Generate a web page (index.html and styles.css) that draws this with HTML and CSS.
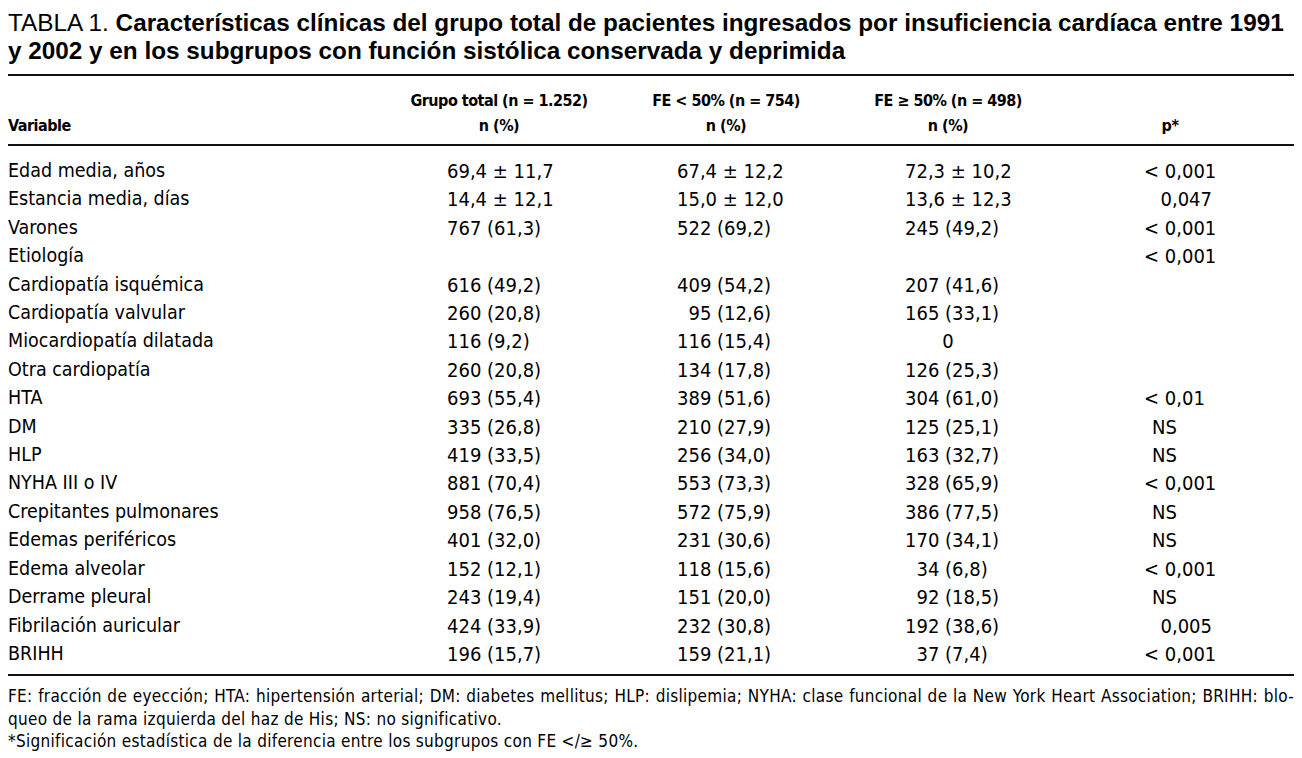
FILE: index.html
```html
<!DOCTYPE html>
<html lang="es">
<head>
<meta charset="utf-8">
<title>Tabla 1</title>
<link rel="stylesheet" href="styles.css">
</head>
<body>
<main class="page">
  <h1 class="title"><span class="label">TABLA 1.</span> <span class="title-bold">Características clínicas del grupo total de pacientes ingresados por insuficiencia cardíaca entre 1991<br>y 2002 y en los subgrupos con función sistólica conservada y deprimida</span></h1>
  <table class="data">
    <colgroup>
      <col class="c0"><col class="c1"><col class="c2"><col class="c3"><col class="c4">
    </colgroup>
    <thead>
      <tr class="hrow1">
        <th></th>
        <th class="hc">Grupo total (n = 1.252)</th>
        <th class="hc">FE &lt; 50% (n = 754)</th>
        <th class="hc">FE ≥ 50% (n = 498)</th>
        <th></th>
      </tr>
      <tr class="hrow2">
        <th class="hvar">Variable</th>
        <th class="hc">n (%)</th>
        <th class="hc">n (%)</th>
        <th class="hc">n (%)</th>
        <th class="hc hp">p*</th>
      </tr>
    </thead>
    <tbody>
      <tr><td>Edad media, años</td><td class="v1">69,4 ± 11,7</td><td class="v2">67,4 ± 12,2</td><td class="v3">72,3 ± 10,2</td><td class="vp"><span class="pv">&lt; 0,001</span></td></tr>
      <tr><td>Estancia media, días</td><td class="v1">14,4 ± 12,1</td><td class="v2">15,0 ± 12,0</td><td class="v3">13,6 ± 12,3</td><td class="vp"><span class="pv pr">0,047</span></td></tr>
      <tr><td>Varones</td><td class="v1">767 (61,3)</td><td class="v2">522 (69,2)</td><td class="v3">245 (49,2)</td><td class="vp"><span class="pv">&lt; 0,001</span></td></tr>
      <tr><td>Etiología</td><td class="v1"></td><td class="v2"></td><td class="v3"></td><td class="vp"><span class="pv">&lt; 0,001</span></td></tr>
      <tr><td>Cardiopatía isquémica</td><td class="v1">616 (49,2)</td><td class="v2">409 (54,2)</td><td class="v3">207 (41,6)</td><td class="vp"></td></tr>
      <tr><td>Cardiopatía valvular</td><td class="v1">260 (20,8)</td><td class="v2">&#8199;95 (12,6)</td><td class="v3">165 (33,1)</td><td class="vp"></td></tr>
      <tr><td>Miocardiopatía dilatada</td><td class="v1">116 (9,2)</td><td class="v2">116 (15,4)</td><td class="v3 zero">0</td><td class="vp"></td></tr>
      <tr><td>Otra cardiopatía</td><td class="v1">260 (20,8)</td><td class="v2">134 (17,8)</td><td class="v3">126 (25,3)</td><td class="vp"></td></tr>
      <tr><td>HTA</td><td class="v1">693 (55,4)</td><td class="v2">389 (51,6)</td><td class="v3">304 (61,0)</td><td class="vp"><span class="pv">&lt; 0,01</span></td></tr>
      <tr><td>DM</td><td class="v1">335 (26,8)</td><td class="v2">210 (27,9)</td><td class="v3">125 (25,1)</td><td class="vp"><span class="pv ns">NS</span></td></tr>
      <tr><td>HLP</td><td class="v1">419 (33,5)</td><td class="v2">256 (34,0)</td><td class="v3">163 (32,7)</td><td class="vp"><span class="pv ns">NS</span></td></tr>
      <tr><td>NYHA III o IV</td><td class="v1">881 (70,4)</td><td class="v2">553 (73,3)</td><td class="v3">328 (65,9)</td><td class="vp"><span class="pv">&lt; 0,001</span></td></tr>
      <tr><td>Crepitantes pulmonares</td><td class="v1">958 (76,5)</td><td class="v2">572 (75,9)</td><td class="v3">386 (77,5)</td><td class="vp"><span class="pv ns">NS</span></td></tr>
      <tr><td>Edemas periféricos</td><td class="v1">401 (32,0)</td><td class="v2">231 (30,6)</td><td class="v3">170 (34,1)</td><td class="vp"><span class="pv ns">NS</span></td></tr>
      <tr><td>Edema alveolar</td><td class="v1">152 (12,1)</td><td class="v2">118 (15,6)</td><td class="v3">&#8199;34 (6,8)</td><td class="vp"><span class="pv">&lt; 0,001</span></td></tr>
      <tr><td>Derrame pleural</td><td class="v1">243 (19,4)</td><td class="v2">151 (20,0)</td><td class="v3">&#8199;92 (18,5)</td><td class="vp"><span class="pv ns">NS</span></td></tr>
      <tr><td>Fibrilación auricular</td><td class="v1">424 (33,9)</td><td class="v2">232 (30,8)</td><td class="v3">192 (38,6)</td><td class="vp"><span class="pv pr">0,005</span></td></tr>
      <tr><td>BRIHH</td><td class="v1">196 (15,7)</td><td class="v2">159 (21,1)</td><td class="v3">&#8199;37 (7,4)</td><td class="vp"><span class="pv">&lt; 0,001</span></td></tr>
    </tbody>
  </table>
  <div class="notes">
    <p class="note justify">FE: fracción de eyección; HTA: hipertensión arterial; DM: diabetes mellitus; HLP: dislipemia; NYHA: clase funcional de la New York Heart Association; BRIHH: blo-</p>
    <p class="note">queo de la rama izquierda del haz de His; NS: no significativo.</p>
    <p class="note">*Significación estadística de la diferencia entre los subgrupos con FE &lt;/≥ 50%.</p>
  </div>
</main>
</body>
</html>
```

FILE: styles.css
```css
html, body {
  margin: 0;
  padding: 0;
  background: #ffffff;
  color: #000000;
}

.page {
  width: 1286px;
  padding: 8px 8px 0 8px;
}

.title {
  margin: 0;
  padding-top: 1px;
  font-family: "Liberation Sans", Arial, sans-serif;
  font-size: 24.3px;
  line-height: 28px;
  font-weight: normal;
  color: #000;
}

.title .title-bold {
  font-weight: bold;
}

.data {
  margin-top: 9px;
  width: 1286px;
  table-layout: fixed;
  border-collapse: collapse;
  border-top: 2px solid #111;
  border-bottom: 2px solid #111;
  font-family: "DejaVu Sans Condensed", "DejaVu Sans", sans-serif;
  font-size: 19.5px;
}

.c0 { width: 384px; }
.c1 { width: 214px; }
.c2 { width: 240px; }
.c3 { width: 204px; }
.c4 { width: 244px; }

.data thead {
  border-bottom: 2px solid #111;
}

.data th {
  font-weight: bold;
  font-size: 16px;
  letter-spacing: -0.5px;
  line-height: 25px;
  padding: 0;
  text-align: left;
  white-space: nowrap;
}

.hrow1 th {
  padding-top: 12px;
}

.hrow2 th {
  padding-bottom: 6px;
}

.data th.hc {
  text-align: center;
}

.data th.hp {
  padding-right: 4px;
}

.data td {
  padding: 0;
  height: 28.4px;
  line-height: 28.4px;
  white-space: nowrap;
}

.data tbody tr:first-child td {
  padding-top: 11px;
}

.data tbody tr:last-child td {
  padding-bottom: 6px;
}

.data td.v1,
.data td.v2,
.data td.v3,
.data td.vp {
  font-size: 20px;
}

.data td.v1 { padding-left: 55px; }
.data td.v2 { padding-left: 71px; }
.data td.v3 { padding-left: 59px; }
.data td.vp { padding-left: 94px; }

.data td.v3.zero {
  padding-left: 0;
  text-align: center;
}

.pv {
  display: inline-block;
  width: 68px;
}

.pv.pr {
  text-align: right;
}

.pv.ns {
  padding-left: 8px;
  width: 60px;
}

.notes {
  margin-top: 9px;
  font-family: "DejaVu Sans Condensed", "DejaVu Sans", sans-serif;
  font-size: 17px;
  letter-spacing: 0.3px;
  line-height: 22.5px;
}

.note {
  margin: 0;
}

.note.justify {
  text-align: justify;
  text-align-last: justify;
}
```
